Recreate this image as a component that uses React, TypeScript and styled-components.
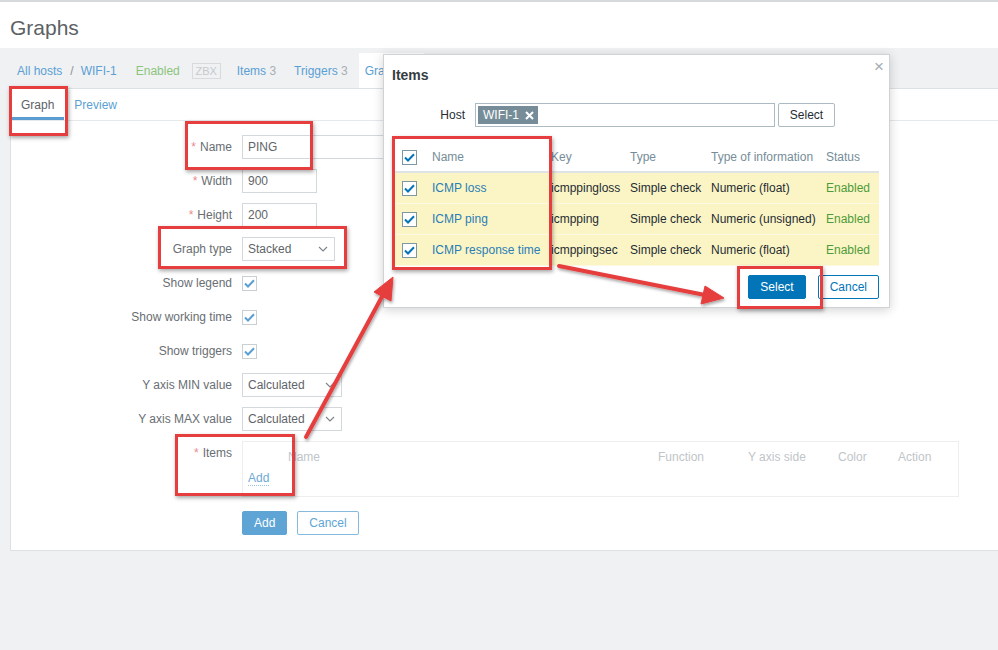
import React from "react";
import styled, { createGlobalStyle } from "styled-components";

const GlobalStyle = createGlobalStyle`
  html, body {
    margin: 0;
    padding: 0;
  }
  body {
    background: #eff1f3;
    font-family: "Liberation Sans", Arial, sans-serif;
    font-size: 12px;
    color: #1f2c33;
  }
`;

const Page = styled.div`
  position: relative;
  width: 998px;
  height: 650px;
  overflow: hidden;
  background: #eff1f3;
`;

const Header = styled.header`
  height: 41px;
  padding: 5px 0 0 10px;
  border-top: 2px solid #d6d9dc;
  background: #fff;
  display: flex;
  align-items: center;
`;

const Title = styled.h1`
  margin: 0;
  font-size: 21px;
  font-weight: 400;
  color: #5c6165;
`;

const NavBar = styled.nav`
  height: 40px;
  padding-left: 17px;
  display: flex;
  align-items: flex-end;
`;

const NavRow = styled.div`
  height: 35px;
  display: flex;
  align-items: center;
`;

const NavLink = styled.span<{ $gap?: number }>`
  color: #5b9fd3;
  margin-left: ${(p) => p.$gap ?? 0}px;
  white-space: nowrap;
`;

const Count = styled.span`
  color: #a9afb3;
`;

const Sep = styled.span`
  color: #8d9296;
  margin: 0 7px 0 8px;
`;

const StatusText = styled.span`
  color: #8cc47c;
  margin-left: 19px;
`;

const ZbxTag = styled.span`
  margin-left: 12px;
  width: 27px;
  height: 14px;
  border: 1px solid #d7dbde;
  color: #c6cacd;
  font-size: 11px;
  display: flex;
  align-items: center;
  justify-content: center;
`;

const NavTab = styled.span`
  margin-left: 11px;
  align-self: stretch;
  background: #fff;
  padding: 0 20px 0 6px;
  display: flex;
  align-items: center;
  color: #5b9fd3;
`;

const Container = styled.main`
  margin-left: 10px;
  height: 461px;
  background: #fff;
  border: 1px solid #dde1e4;
  border-right: none;
`;

const Tabs = styled.div`
  height: 31px;
  border-bottom: 1px solid #e6e9eb;
  display: flex;
`;

const Tab = styled.div<{ $active?: boolean }>`
  padding: 0 10px;
  display: flex;
  align-items: center;
  color: ${(p) => (p.$active ? "#5d6266" : "#5b9fd3")};
  box-shadow: ${(p) => (p.$active ? "inset 0 -3px 0 #5b9dd0" : "none")};
`;

const Form = styled.div`
  padding: 14px 0 14px;
  display: grid;
  grid-template-columns: 221px 1fr;
  column-gap: 10px;
  row-gap: 10px;
`;

const Label = styled.div<{ $top?: boolean }>`
  min-height: 24px;
  display: flex;
  justify-content: flex-end;
  align-items: ${(p) => (p.$top ? "flex-start" : "center")};
  padding-top: ${(p) => (p.$top ? 5 : 0)}px;
  color: #696e72;
  white-space: nowrap;
`;

const Req = styled.span`
  color: #ea8c8c;
  margin-right: 4px;
`;

const Field = styled.div`
  min-height: 24px;
  display: flex;
  align-items: center;
`;

const TextInput = styled.div<{ $w: number }>`
  width: ${(p) => p.$w}px;
  height: 24px;
  box-sizing: border-box;
  border: 1px solid #d3d8dc;
  padding: 0 5px;
  display: flex;
  align-items: center;
  color: #5f6468;
`;

const Select = styled(TextInput)`
  justify-content: space-between;
  padding-right: 6px;
`;

const Check = styled.span<{ $dark?: boolean }>`
  width: 15px;
  height: 15px;
  box-sizing: border-box;
  border: 1px solid ${(p) => (p.$dark ? "#7e97a4" : "#c9d0d4")};
  background: #fff;
  display: flex;
  align-items: center;
  justify-content: center;
`;

const ItemsBox = styled.div`
  width: 717px;
  height: 56px;
  box-sizing: border-box;
  border: 1px solid #eceef0;
  padding: 8px 0 0 5px;
`;

const ItemsHead = styled.div`
  display: grid;
  grid-template-columns: 40px 370px 90px 90px 60px 1fr;
  color: #bfc5c9;
  line-height: 14px;
`;

const AddLink = styled.span`
  display: inline-block;
  margin-top: 8px;
  color: #6ea9d6;
  border-bottom: 1px dotted #9cc4e2;
  line-height: 13px;
`;

const Buttons = styled.div`
  margin-top: 4px;
  display: flex;
  gap: 10px;
`;

const Button = styled.button<{ $primary?: boolean; $faded?: boolean }>`
  height: 24px;
  padding: 0 11px;
  font-family: inherit;
  font-size: 12px;
  border-radius: 2px;
  border: 1px solid ${(p) => (p.$faded ? (p.$primary ? "#5ea5d6" : "#85b9dd") : "#0275b8")};
  background: ${(p) => (p.$primary ? (p.$faded ? "#5ea5d6" : "#0275b8") : "#fff")};
  color: ${(p) => (p.$primary ? "#fff" : p.$faded ? "#5ea5d6" : "#0275b8")};
`;

/* modal */

const Modal = styled.section`
  position: absolute;
  left: 383px;
  top: 54px;
  width: 507px;
  height: 254px;
  box-sizing: border-box;
  background: #fff;
  border: 1px solid #cfd3d6;
  box-shadow: 0 2px 10px rgba(0, 0, 0, 0.18);
  padding: 12px 10px 0;
`;

const ModalTitle = styled.h2`
  margin: 0 0 0 -2px;
  font-size: 14px;
  font-weight: 700;
  line-height: 16px;
  color: #353d42;
`;

const Close = styled.span`
  position: absolute;
  top: 2px;
  right: 5px;
  font-size: 17px;
  color: #a3adb3;
`;

const HostRow = styled.div`
  margin-top: 20px;
  display: grid;
  grid-template-columns: 71px 300px auto;
  column-gap: 10px;
  align-items: center;
`;

const HostLabel = styled.div`
  text-align: right;
  color: #1f2c33;
`;

const MultiSelect = styled.div`
  height: 24px;
  box-sizing: border-box;
  border: 1px solid #acbbc2;
  padding: 0 2px;
  display: flex;
  align-items: center;
`;

const HostTag = styled.span`
  height: 18px;
  padding: 0 4px 0 5px;
  background: #768d99;
  color: #fff;
  display: flex;
  align-items: center;
  gap: 6px;
`;

const PlainButton = styled.button`
  margin-left: -7px;
  height: 24px;
  width: 57px;
  font-family: inherit;
  font-size: 12px;
  color: #1f2c33;
  background: #fff;
  border: 1px solid #acbbc2;
  border-radius: 2px;
`;

const Table = styled.div`
  margin-top: 16px;
`;

const TRow = styled.div<{ $head?: boolean }>`
  display: grid;
  grid-template-columns: 30px 119px 79px 81px 115px 1fr;
  height: ${(p) => (p.$head ? 28 : 30)}px;
  align-items: center;
  background: ${(p) => (p.$head ? "#fff" : "#fbf5c6")};
  border-bottom: ${(p) => (p.$head ? "2px solid #dfe3e6" : "1px solid #fdf9e0")};
  color: ${(p) => (p.$head ? "#768d99" : "#1f2c33")};
  white-space: nowrap;
`;

const Cell = styled.div<{ $tone?: "link" | "ok" }>`
  padding-left: 8px;
  color: ${(p) => (p.$tone === "link" ? "#2a7db5" : p.$tone === "ok" ? "#4f9b3b" : "inherit")};
  display: flex;
  align-items: center;
`;

const ModalFooter = styled.div`
  margin-top: 9px;
  display: flex;
  justify-content: flex-end;
  gap: 12px;
  padding-right: 0;
`;

/* annotations */

const Mark = styled.div<{ $x: number; $y: number; $w: number; $h: number }>`
  position: absolute;
  left: ${(p) => p.$x}px;
  top: ${(p) => p.$y}px;
  width: ${(p) => p.$w}px;
  height: ${(p) => p.$h}px;
  box-sizing: border-box;
  border: 3px solid #e63d3e;
  box-shadow: 1px 2px 4px rgba(0, 0, 0, 0.35);
  pointer-events: none;
`;

const ArrowLayer = styled.svg`
  position: absolute;
  left: 0;
  top: 0;
  pointer-events: none;
`;

const Tick = ({ color }: { color: string }) => (
  <svg width="11" height="9" viewBox="0 0 11 9">
    <path d="M1 4.5 L4 7.5 L10 1.2" fill="none" stroke={color} strokeWidth="2" />
  </svg>
);

const Chevron = () => (
  <svg width="10" height="6" viewBox="0 0 10 6">
    <path d="M1 1 L5 5 L9 1" fill="none" stroke="#7b8389" strokeWidth="1.1" />
  </svg>
);

const modalRows = [
  { name: "ICMP loss", key: "icmppingloss", info: "Numeric (float)" },
  { name: "ICMP ping", key: "icmpping", info: "Numeric (unsigned)" },
  { name: "ICMP response time", key: "icmppingsec", info: "Numeric (float)" },
];

const checks = ["Show legend", "Show working time", "Show triggers"];

export default function App() {
  return (
    <Page>
      <GlobalStyle />
      <Header>
        <Title>Graphs</Title>
      </Header>
      <NavBar>
        <NavRow>
          <NavLink>All hosts</NavLink>
          <Sep>/</Sep>
          <NavLink>WIFI-1</NavLink>
          <StatusText>Enabled</StatusText>
          <ZbxTag>ZBX</ZbxTag>
          <NavLink $gap={16}>
            Items <Count>3</Count>
          </NavLink>
          <NavLink $gap={18}>
            Triggers <Count>3</Count>
          </NavLink>
          <NavTab>Graphs</NavTab>
        </NavRow>
      </NavBar>

      <Container>
        <Tabs>
          <Tab $active>Graph</Tab>
          <Tab>Preview</Tab>
        </Tabs>
        <Form>
          <Label>
            <Req>*</Req>Name
          </Label>
          <Field>
            <TextInput $w={453}>PING</TextInput>
          </Field>

          <Label>
            <Req>*</Req>Width
          </Label>
          <Field>
            <TextInput $w={75}>900</TextInput>
          </Field>

          <Label>
            <Req>*</Req>Height
          </Label>
          <Field>
            <TextInput $w={75}>200</TextInput>
          </Field>

          <Label>Graph type</Label>
          <Field>
            <Select $w={93}>
              Stacked
              <Chevron />
            </Select>
          </Field>

          {checks.map((c) => (
            <React.Fragment key={c}>
              <Label>{c}</Label>
              <Field>
                <Check>
                  <Tick color="#5b9fd3" />
                </Check>
              </Field>
            </React.Fragment>
          ))}

          <Label>Y axis MIN value</Label>
          <Field>
            <Select $w={100}>
              Calculated
              <Chevron />
            </Select>
          </Field>

          <Label>Y axis MAX value</Label>
          <Field>
            <Select $w={100}>
              Calculated
              <Chevron />
            </Select>
          </Field>

          <Label $top>
            <Req>*</Req>Items
          </Label>
          <ItemsBox>
            <ItemsHead>
              <span />
              <span>Name</span>
              <span>Function</span>
              <span>Y axis side</span>
              <span>Color</span>
              <span>Action</span>
            </ItemsHead>
            <AddLink>Add</AddLink>
          </ItemsBox>

          <span />
          <Buttons>
            <Button $primary $faded>
              Add
            </Button>
            <Button $faded>Cancel</Button>
          </Buttons>
        </Form>
      </Container>

      <Modal>
        <ModalTitle>Items</ModalTitle>
        <Close>×</Close>
        <HostRow>
          <HostLabel>Host</HostLabel>
          <MultiSelect>
            <HostTag>
              WIFI-1
              <svg width="9" height="9" viewBox="0 0 9 9">
                <path d="M1 1 L8 8 M8 1 L1 8" stroke="#fff" strokeWidth="2" />
              </svg>
            </HostTag>
          </MultiSelect>
          <PlainButton>Select</PlainButton>
        </HostRow>
        <Table>
          <TRow $head>
            <Cell>
              <Check $dark>
                <Tick color="#0275b8" />
              </Check>
            </Cell>
            <Cell>Name</Cell>
            <Cell>Key</Cell>
            <Cell>Type</Cell>
            <Cell>Type of information</Cell>
            <Cell>Status</Cell>
          </TRow>
          {modalRows.map((r) => (
            <TRow key={r.name}>
              <Cell>
                <Check $dark>
                  <Tick color="#0275b8" />
                </Check>
              </Cell>
              <Cell $tone="link">{r.name}</Cell>
              <Cell>{r.key}</Cell>
              <Cell>Simple check</Cell>
              <Cell>{r.info}</Cell>
              <Cell $tone="ok">Enabled</Cell>
            </TRow>
          ))}
        </Table>
        <ModalFooter>
          <Button $primary>Select</Button>
          <Button>Cancel</Button>
        </ModalFooter>
      </Modal>

      <Mark $x={9} $y={86} $w={59} $h={50} />
      <Mark $x={185} $y={121} $w={128} $h={49} />
      <Mark $x={158} $y={226} $w={189} $h={43} />
      <Mark $x={175} $y={434} $w={120} $h={62} />
      <Mark $x={392} $y={136} $w={160} $h={134} />
      <Mark $x={737} $y={266} $w={86} $h={43} />

      <ArrowLayer width="998" height="650" viewBox="0 0 998 650">
        <defs>
          <filter id="sh" x="-20%" y="-20%" width="140%" height="140%">
            <feDropShadow dx="1" dy="2" stdDeviation="1.5" floodOpacity="0.35" />
          </filter>
        </defs>
        <g filter="url(#sh)" fill="#e63d3e" stroke="#e63d3e">
          <line x1="306" y1="437" x2="384" y2="293" strokeWidth="4" strokeLinecap="round" />
          <polygon points="393,277 391,301 374,292" strokeWidth="1" />
          <line x1="559" y1="266" x2="705" y2="295" strokeWidth="4" strokeLinecap="round" />
          <polygon points="724,298 701,304 705,286" strokeWidth="1" />
        </g>
      </ArrowLayer>
    </Page>
  );
}
